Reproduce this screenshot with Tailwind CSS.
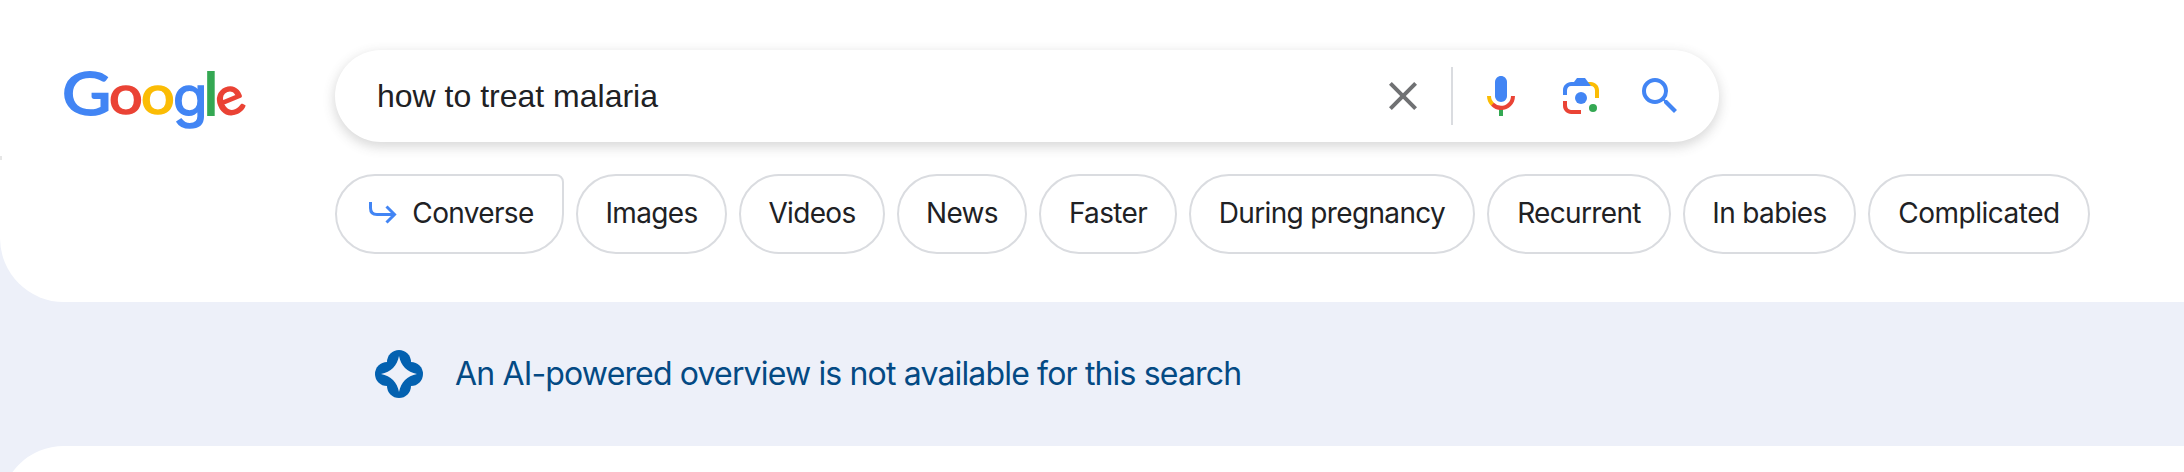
<!DOCTYPE html>
<html lang="en">
<head>
<meta charset="utf-8">
<title>how to treat malaria - Google Search</title>
<script src="https://cdn.jsdelivr.net/npm/@tailwindcss/browser@4"></script>
</head>
<body class="h-[472px] overflow-hidden bg-[#edf0f9]">
<header class="relative h-[302px] rounded-bl-[64px] bg-white pt-[50px]">
  <span class="absolute left-0 top-[156px] h-1 w-0.5 bg-[#e6e6e6]"></span>
  <div class="flex items-start">
    <a class="block w-[335px] shrink-0 pl-[56px]" aria-label="Google">
      <svg class="block h-[92px] w-[200px]" viewBox="56 50 200 92" font-family="Lato, sans-serif" font-size="100" stroke-width="3">
        <text transform="translate(62 114.6) scale(.675 .6)" fill="#4285f4" stroke="#4285f4">G</text>
        <text transform="translate(109.1 114.4) scale(.595 .535)" fill="#ea4335" stroke="#ea4335">o</text>
        <text transform="translate(141.1 114.4) scale(.595 .535)" fill="#fbbc05" stroke="#fbbc05">o</text>
        <text transform="translate(172.9 116.2) scale(.563 .54)" fill="#4285f4" stroke="#4285f4" font-family="Inter, sans-serif">g</text>
        <text transform="translate(203.4 115.3) scale(.63 .585)" fill="#34a853" stroke="#34a853">l</text>
        <text transform="translate(230.3 101) rotate(-22) scale(.54 .53) translate(-26.5 25.5)" fill="#ea4335" stroke="#ea4335">e</text>
      </svg>
    </a>
    <div class="flex h-[92px] w-[1384px] items-center rounded-full bg-white pl-[42px] pr-[35px] shadow-[0_4px_12px_1px_rgba(64,64,64,0.2)]">
      <span class="grow font-['Liberation_Sans',Arial,sans-serif] text-[32px] leading-[40px] text-[#202124]">how to treat malaria</span>
      <svg class="mr-6 size-12" viewBox="0 0 24 24" fill="#707173"><path d="M19 6.41L17.59 5 12 10.59 6.41 5 5 6.41 10.59 12 5 17.59 6.41 19 12 13.41 17.59 19 19 17.59 13.41 12z"/></svg>
      <span class="mr-6 h-[58px] w-0.5 bg-[#dadce0]"></span>
      <svg class="mr-8 size-12" viewBox="0 0 24 24"><path fill="#4285f4" d="M12 15c1.66 0 3-1.31 3-2.97V4.99c0-1.66-1.34-2.99-3-2.99s-3 1.33-3 2.99v7.04c0 1.66 1.34 2.97 3 2.97z"/><path fill="#34a853" d="M11 18.08h2V22h-2z"/><path fill="#fbbc04" d="M7.05 16.87C5.78 15.54 5 14.04 5 12h2c0 1.45.56 2.42 1.47 3.38v.32l-1.15 1.18z"/><path fill="#ea4335" d="M12 16.93a4.97 5.25 0 0 1-3.54-1.55l-1.41 1.49c1.26 1.34 3.02 2.13 4.95 2.13 3.87 0 6.99-2.92 6.99-7H17c0 2.92-2.24 4.93-5 4.93z"/></svg>
      <svg class="mr-[31px] size-12" viewBox="0 0 192 192"><circle fill="#34a853" cx="144" cy="144" r="16"/><circle fill="#4285f4" cx="96" cy="104" r="24"/><path fill="#ea4335" d="M24 135.2c0 18.11 14.69 32.8 32.8 32.8H96v-16l-40.1-.1c-8.8 0-15.9-8.19-15.9-17.9v-18H24z"/><path fill="#fbbc04" d="M168 72.8c0-18.11-14.69-32.8-32.8-32.8H116l20 16c8.8 0 16 8.29 16 18v30h16z"/><path fill="#4285f4" d="M112 24H80L68 40H56.8C38.69 40 24 54.69 24 72.8V92h16V74c0-9.71 7.2-18 16-18h80z"/></svg>
      <svg class="size-12" viewBox="0 0 24 24" fill="#4285f4"><path d="M15.5 14h-.79l-.28-.27A6.471 6.471 0 0 0 16 9.5 6.5 6.5 0 1 0 9.5 16c1.61 0 3.09-.59 4.23-1.57l.27.28v.79l5 4.99L20.49 19zm-6 0C7.01 14 5 11.99 5 9.5S7.01 5 9.5 5 14 7.01 14 9.5 11.99 14 9.5 14z"/></svg>
    </div>
  </div>
  <nav class="ml-[335px] mt-8 flex gap-3 font-[Inter,sans-serif] text-[28px] leading-[40px] tracking-[-0.65px] text-[#202124] *:flex *:h-20 *:shrink-0 *:items-center *:justify-center *:rounded-[40px] *:border-2 *:border-[#dadce0] *:pb-0.5">
    <a class="w-[229px] rounded-tr-[8px]! pl-[3px]"><svg class="mr-[15px] h-6 w-[29px]" viewBox="0 0 29 24" fill="none" stroke="#4285f4" stroke-width="3"><path d="M2.500 1v6q0 6.500 6.500 6.500h17M18.500 5.500l8 8-8 8"/></svg>Converse</a>
    <a class="w-[151px]">Images</a>
    <a class="w-[146px]">Videos</a>
    <a class="w-[130px]">News</a>
    <a class="w-[138px]">Faster</a>
    <a class="w-[286px]">During pregnancy</a>
    <a class="w-[184px]">Recurrent</a>
    <a class="w-[173px]">In babies</a>
    <a class="w-[222px] tracking-[-0.5px]">Complicated</a>
  </nav>
</header>
<section class="flex h-36 items-center pl-[375px]">
  <svg class="mr-8 size-12" viewBox="-24 -24 48 48" fill="#0361b0"><circle cy="-12" r="12"/><circle cy="12" r="12"/><circle cx="-12" r="12"/><circle cx="12" r="12"/><path d="M-12-12h24v24h-24z"/><path fill="#edf0f9" d="M0-18C2-8 8-2 18 0 8 2 2 8 0 18-2 8-8 2-18 0-8-2-2-8 0-18z"/></svg>
  <p class="pb-px font-[Inter,sans-serif] text-[32px] leading-[40px] tracking-[-0.84px] text-[#044a84]">An AI-powered overview is not available for this search</p>
</section>
<main class="h-[26px] bg-white [clip-path:inset(0_0_-74px_0_round_64px_0_0_0)]"></main>
</body>
</html>
